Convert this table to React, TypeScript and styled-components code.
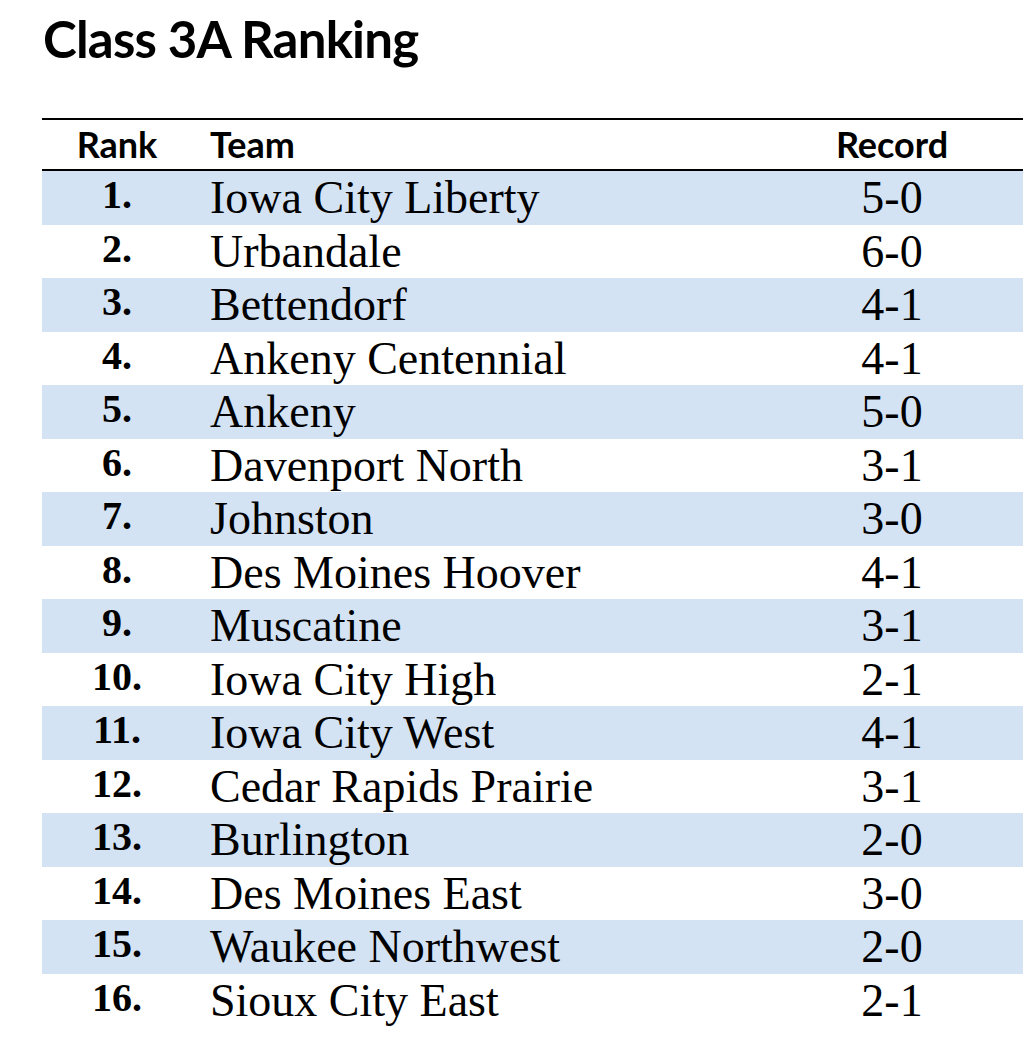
import React from 'react';
import styled, { createGlobalStyle } from 'styled-components';

const GlobalStyle = createGlobalStyle`
  html, body {
    margin: 0;
    padding: 0;
    background: #ffffff;
    overflow: hidden;
  }
`;

const Page = styled.div`
  width: 1023px;
  height: 1054px;
  padding-top: 9px;
  box-sizing: border-box;
  color: #000000;
`;

const Title = styled.h1`
  margin: 0 0 49px 43px;
  font-family: Lato, "Liberation Sans", sans-serif;
  font-weight: 700;
  font-size: 51px;
  line-height: 60px;
  letter-spacing: -0.8px;
`;

const Table = styled.div`
  margin-left: 42px;
  border-top: 2px solid #000000;
`;

const Grid = styled.div`
  display: grid;
  grid-template-columns: 150px 588px 224px;
  padding-right: 19px;
`;

const HeaderRow = styled(Grid)`
  height: 49px;
  border-bottom: 2px solid #000000;
  font-family: Lato, "Liberation Sans", sans-serif;
  font-weight: 700;
  font-size: 36px;
  line-height: 49px;
`;

const HeaderCell = styled.div<{ $align: 'left' | 'center' }>`
  text-align: ${(p) => p.$align};
  padding-left: ${(p) => (p.$align === 'left' ? '18px' : '0')};
`;

const Row = styled(Grid)<{ $shaded: boolean }>`
  height: 53.5px;
  background: ${(p) => (p.$shaded ? '#d4e3f4' : '#ffffff')};
  font-family: "Liberation Serif", "Times New Roman", serif;
`;

const RankCell = styled.div`
  text-align: center;
  font-weight: 700;
  font-size: 40px;
  line-height: 47px;
`;

const TeamCell = styled.div`
  padding-left: 18px;
  font-size: 46px;
  line-height: 53.5px;
  white-space: nowrap;
`;

const RecordCell = styled.div`
  text-align: center;
  font-size: 46px;
  line-height: 53.5px;
`;

const teams: [string, string][] = [
  ['Iowa City Liberty', '5-0'],
  ['Urbandale', '6-0'],
  ['Bettendorf', '4-1'],
  ['Ankeny Centennial', '4-1'],
  ['Ankeny', '5-0'],
  ['Davenport North', '3-1'],
  ['Johnston', '3-0'],
  ['Des Moines Hoover', '4-1'],
  ['Muscatine', '3-1'],
  ['Iowa City High', '2-1'],
  ['Iowa City West', '4-1'],
  ['Cedar Rapids Prairie', '3-1'],
  ['Burlington', '2-0'],
  ['Des Moines East', '3-0'],
  ['Waukee Northwest', '2-0'],
  ['Sioux City East', '2-1'],
];

const App: React.FC = () => {
  return (
    <Page>
      <GlobalStyle />
      <Title>Class 3A Ranking</Title>
      <Table>
        <HeaderRow>
          <HeaderCell $align="center">Rank</HeaderCell>
          <HeaderCell $align="left">Team</HeaderCell>
          <HeaderCell $align="center">Record</HeaderCell>
        </HeaderRow>
        {teams.map(([team, record], i) => (
          <Row key={team} $shaded={i % 2 === 0}>
            <RankCell>{i + 1}.</RankCell>
            <TeamCell>{team}</TeamCell>
            <RecordCell>{record}</RecordCell>
          </Row>
        ))}
      </Table>
    </Page>
  );
};

export default App;
